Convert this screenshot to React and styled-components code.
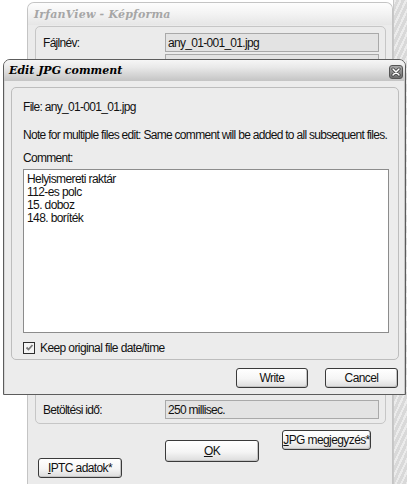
import React from "react";
import styled, { createGlobalStyle } from "styled-components";

const Global = createGlobalStyle`
  * { box-sizing: border-box; }
  html, body { margin: 0; padding: 0; background: #ffffff; }
  body { width: 407px; height: 484px; overflow: hidden; font-family: "Liberation Sans", Arial, sans-serif; }
`;

const Page = styled.div`
  position: relative;
  width: 407px;
  height: 484px;
  display: flex;
  padding-top: 2px;
  padding-left: 27px;
  background: #ffffff;
`;

const Window = styled.div`
  width: 366px;
  height: 490px;
  display: flex;
  flex-direction: column;
  border: 1px solid #c4c4c4;
  border-bottom: none;
  border-radius: 7px 7px 0 0;
  background: #ebebeb;
`;

const Texture = styled.div`
  flex: 1;
  margin-top: -2px;
  background:
    repeating-linear-gradient(115deg, rgba(255,255,255,0.4) 0 2px, rgba(0,0,0,0.025) 2px 5px),
    #dedede;
  border-left: 1px solid #c8c8c8;
`;

const WinTitle = styled.div`
  height: 22px;
  display: flex;
  align-items: center;
  padding-left: 6px;
  border-radius: 6px 6px 0 0;
  background: linear-gradient(#fdfdfd, #f4f4f4 45%, #e6e6e6);
  font-family: "DejaVu Serif", "Liberation Serif", serif;
  font-style: italic;
  font-weight: bold;
  font-size: 11px;
  letter-spacing: 0.2px;
  color: #a6a6a6;
`;

const WinBody = styled.div`
  flex: 1;
  display: flex;
  flex-direction: column;
  padding: 1px 6px 0 7px;
`;

const InfoGroup = styled.div`
  height: 398px;
  display: flex;
  flex-direction: column;
  gap: 2px;
  padding: 6px 6px 4px 7px;
  border: 1px solid #c6c6c6;
  border-radius: 5px;
`;

const InfoRow = styled.div`
  display: flex;
  align-items: center;
  height: 19px;
`;

const Spacer = styled.div`
  flex: 1;
`;

const Label = styled.div`
  width: 122px;
  font-size: 12px;
  letter-spacing: -0.7px;
  color: #111;
`;

const Field = styled.div`
  flex: 1;
  height: 19px;
  display: flex;
  align-items: center;
  padding-left: 2px;
  background: #e3e3e3;
  border: 1px solid #a9a9a9;
  font-size: 12px;
  letter-spacing: -0.7px;
  color: #111;
`;

const ButtonArea = styled.div`
  display: grid;
  grid-template-columns: 83px 93px 88px;
  align-items: start;
  padding-left: 3px;
`;

const Btn = styled.button`
  height: ${(p) => p.h || 20}px;
  width: ${(p) => p.w}px;
  margin-top: ${(p) => p.top || 0}px;
  margin-left: ${(p) => p.left || 0}px;
  padding: 0;
  display: flex;
  align-items: center;
  justify-content: center;
  border: 1px solid #3a3a3a;
  border-radius: 3px;
  background: linear-gradient(#ffffff, #f5f5f5 55%, #dcdcdc);
  box-shadow: inset -1px -1px 0 #c4c4c4;
  font-family: "Liberation Sans", Arial, sans-serif;
  font-size: 12px;
  letter-spacing: -0.6px;
  color: #111;
  u { text-decoration: underline; text-underline-offset: 1px; }
`;

const Dialog = styled.div`
  position: absolute;
  left: 3px;
  top: 59px;
  width: 403px;
  height: 336px;
  display: flex;
  flex-direction: column;
  border: 1px solid #5c5c5c;
  border-radius: 7px 7px 0 0;
  background: #ececec;
  box-shadow: inset 1px 0 0 #d6d6d6, inset -1px 0 0 #c8c8c8;
`;

const TitleBar = styled.div`
  height: 21px;
  display: flex;
  align-items: center;
  justify-content: space-between;
  padding: 0 2px 0 5px;
  border-radius: 6px 6px 0 0;
  background: linear-gradient(#f6f6f6, #e9e9e9 35%, #d2d2d2 75%, #c4c4c4);
  font-family: "DejaVu Serif", "Liberation Serif", serif;
  font-style: italic;
  font-weight: bold;
  font-size: 11px;
  color: #000;
`;

const CloseBtn = styled.div`
  width: 14px;
  height: 14px;
  margin-top: 2px;
  display: flex;
  align-items: center;
  justify-content: center;
  border: 1px solid #555;
  border-radius: 3px;
  background: linear-gradient(#a8a8a8, #6e6e6e);
`;

const DlgBody = styled.div`
  flex: 1;
  display: flex;
  flex-direction: column;
  padding: 6px 6px 6px 7px;
`;

const Group = styled.div`
  height: 273px;
  display: flex;
  flex-direction: column;
  padding: 12px 9px 0 11px;
  border: 1px solid #bdbdbd;
  border-radius: 5px;
`;

const Text = styled.div`
  height: 14px;
  line-height: 14px;
  margin-top: ${(p) => p.top || 0}px;
  font-size: 12px;
  letter-spacing: -0.7px;
  color: #111;
  white-space: nowrap;
`;

const Memo = styled.div`
  height: 164px;
  margin-top: 4px;
  padding: 3px 3px;
  background: #ffffff;
  border: 1px solid #8c8c8c;
  font-size: 12px;
  line-height: 13px;
  letter-spacing: -0.6px;
  color: #111;
`;

const CheckRow = styled.div`
  display: flex;
  align-items: center;
  gap: 5px;
  margin-top: 8px;
  height: 13px;
  font-size: 12px;
  letter-spacing: -0.6px;
  color: #111;
`;

const Box = styled.div`
  width: 12px;
  height: 12px;
  display: flex;
  align-items: center;
  justify-content: center;
  border: 1px solid #2e2e2e;
  background: #f4f4f4;
`;

const DlgButtons = styled.div`
  display: flex;
  justify-content: flex-end;
  gap: 17px;
  margin-top: 8px;
  padding-right: 1px;
`;

export default function App() {
  return (
    <>
      <Global />
      <Page>
        <Window>
          <WinTitle>IrfanView - Képforma</WinTitle>
          <WinBody>
            <InfoGroup>
              <InfoRow>
                <Label>Fájlnév:</Label>
                <Field>any_01-001_01.jpg</Field>
              </InfoRow>
              <InfoRow>
                <Label />
                <Field />
              </InfoRow>
              <Spacer />
              <InfoRow>
                <Label>Betöltési idő:</Label>
                <Field>250 millisec.</Field>
              </InfoRow>
            </InfoGroup>
            <ButtonArea>
              <Btn w={84} top={34}>
                <span><u>I</u>PTC adatok*</span>
              </Btn>
              <Btn w={94} h={22} top={16} left={44}>
                <span><u>O</u>K</span>
              </Btn>
              <Btn w={89} top={6} left={68}>
                <span><u>J</u>PG megjegyzés*</span>
              </Btn>
            </ButtonArea>
          </WinBody>
        </Window>
        <Texture />

        <Dialog>
          <TitleBar>
            <span>Edit JPG comment</span>
            <CloseBtn>
              <svg width="10" height="10" viewBox="0 0 10 10">
                <path d="M2 2 L8 8 M8 2 L2 8" stroke="#333" strokeWidth="3" strokeLinecap="round" />
                <path d="M2 2 L8 8 M8 2 L2 8" stroke="#fff" strokeWidth="1.6" strokeLinecap="round" />
              </svg>
            </CloseBtn>
          </TitleBar>
          <DlgBody>
            <Group>
              <Text>File: any_01-001_01.jpg</Text>
              <Text top={14}>
                Note for multiple files edit: Same comment will be added to all subsequent files.
              </Text>
              <Text top={9}>Comment:</Text>
              <Memo>
                Helyismereti raktár
                <br />
                112-es polc
                <br />
                15. doboz
                <br />
                148. boríték
              </Memo>
              <CheckRow>
                <Box>
                  <svg width="9" height="9" viewBox="0 0 9 9">
                    <path d="M1.5 4.5 L3.5 6.5 L7.5 2" fill="none" stroke="#7a7a7a" strokeWidth="1.8" />
                  </svg>
                </Box>
                <span>Keep original file date/time</span>
              </CheckRow>
            </Group>
            <DlgButtons>
              <Btn w={72}>Write</Btn>
              <Btn w={73}>Cancel</Btn>
            </DlgButtons>
          </DlgBody>
        </Dialog>
      </Page>
    </>
  );
}
